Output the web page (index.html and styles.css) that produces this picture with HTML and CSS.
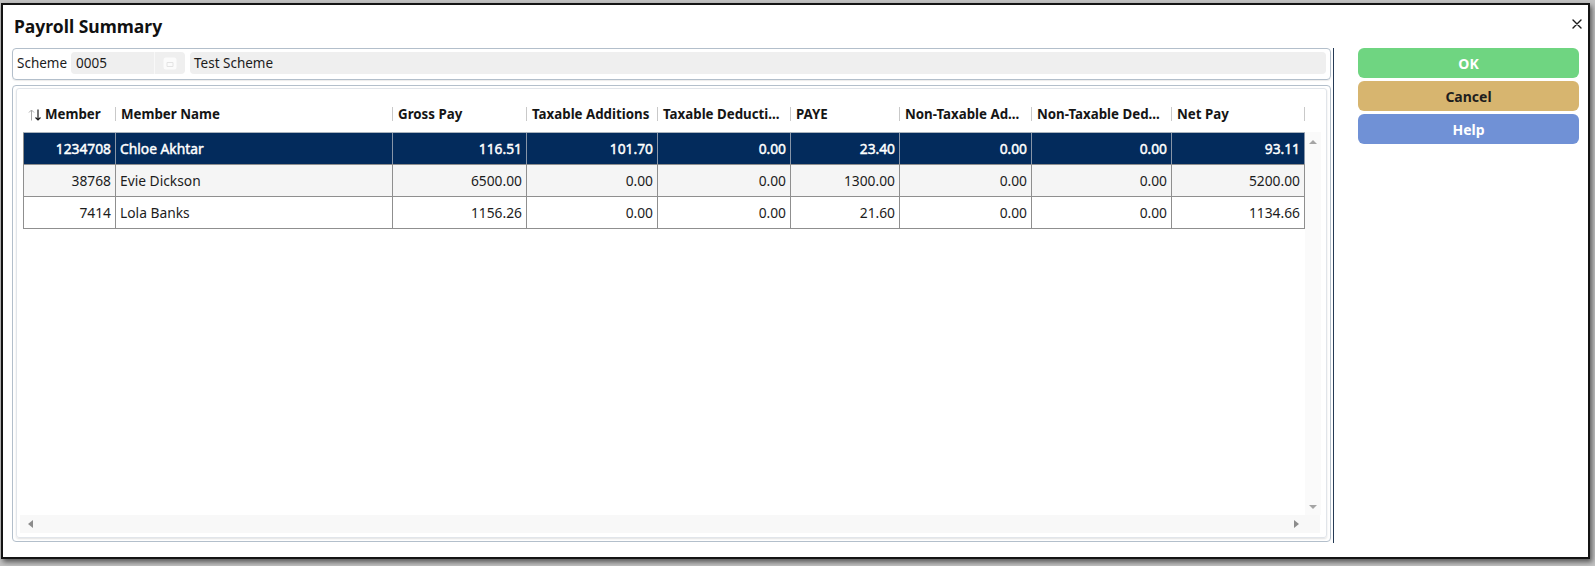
FILE: index.html
```html
<!DOCTYPE html>
<html lang="en">
<head>
<meta charset="utf-8">
<title>Payroll Summary</title>
<link rel="stylesheet" href="styles.css">
</head>
<body>
<div class="dialog">
  <div class="titlebar">
    <h1 class="title">Payroll Summary</h1>
    <button class="close" aria-label="Close">
      <svg width="10" height="10" viewBox="0 0 10 10"><path d="M1 1 L9 9 M9 1 L1 9" stroke="#1a1a1a" stroke-width="1.4" fill="none" stroke-linecap="round"/></svg>
    </button>
  </div>
  <div class="content">
    <div class="main">
      <div class="scheme-box">
        <span class="scheme-label">Scheme</span>
        <div class="code-field">
          <span class="code-value">0005</span>
          <span class="lookup">
            <svg width="14" height="13" viewBox="0 0 14 13"><rect x="0.5" y="0.5" width="13" height="12" rx="2.5" fill="#fbfbfb"/><path d="M4 5.5 H10 V9.5 H4 Z" fill="none" stroke="#e3e3e3" stroke-width="1"/></svg>
          </span>
        </div>
        <div class="name-field">Test Scheme</div>
      </div>
      <div class="grid-panel">
        <div class="grid-inner">
          <div class="grid-body">
            <div class="head-row">
              <div class="hcell"><svg class="sort" width="14" height="12" viewBox="0 0 14 12"><path d="M3.5 11.5 V1 M1 3.5 L3.5 1 L6 3.5" stroke="#a8a8a8" stroke-width="1" fill="none"/><path d="M10 0.5 V11 M7.5 8.5 L10 11 L12.5 8.5" stroke="#1a1a1a" stroke-width="1.2" fill="none"/></svg>Member</div>
              <div class="hcell">Member Name</div>
              <div class="hcell">Gross Pay</div>
              <div class="hcell">Taxable Additions</div>
              <div class="hcell">Taxable Deducti...</div>
              <div class="hcell">PAYE</div>
              <div class="hcell">Non-Taxable Ad...</div>
              <div class="hcell">Non-Taxable Ded...</div>
              <div class="hcell">Net Pay</div>
            </div>
            <div class="head-gap"></div>
            <div class="rows">
              <div class="row selected">
                <div class="cell num">1234708</div>
                <div class="cell">Chloe Akhtar</div>
                <div class="cell num">116.51</div>
                <div class="cell num">101.70</div>
                <div class="cell num">0.00</div>
                <div class="cell num">23.40</div>
                <div class="cell num">0.00</div>
                <div class="cell num">0.00</div>
                <div class="cell num">93.11</div>
              </div>
              <div class="row alt">
                <div class="cell num">38768</div>
                <div class="cell">Evie Dickson</div>
                <div class="cell num">6500.00</div>
                <div class="cell num">0.00</div>
                <div class="cell num">0.00</div>
                <div class="cell num">1300.00</div>
                <div class="cell num">0.00</div>
                <div class="cell num">0.00</div>
                <div class="cell num">5200.00</div>
              </div>
              <div class="row">
                <div class="cell num">7414</div>
                <div class="cell">Lola Banks</div>
                <div class="cell num">1156.26</div>
                <div class="cell num">0.00</div>
                <div class="cell num">0.00</div>
                <div class="cell num">21.60</div>
                <div class="cell num">0.00</div>
                <div class="cell num">0.00</div>
                <div class="cell num">1134.66</div>
              </div>
            </div>
            <div class="vscroll">
              <span class="arrow up"></span>
              <span class="arrow down"></span>
            </div>
          </div>
          <div class="hscroll">
            <span class="arrow left"></span>
            <span class="arrow right"></span>
          </div>
        </div>
      </div>
    </div>
    <div class="splitter"></div>
    <div class="actions">
      <button class="btn ok">OK</button>
      <button class="btn cancel">Cancel</button>
      <button class="btn help">Help</button>
    </div>
  </div>
</div>
</body>
</html>
```
FILE: styles.css
```css
* { box-sizing: border-box; }
html, body { margin: 0; padding: 0; }
body {
  width: 1595px;
  height: 566px;
  overflow: hidden;
  background: #c2c2c2;
  font-family: "Noto Sans", "Open Sans", sans-serif;
  font-size: 13.5px;
  color: #1c1c1c;
}
.dialog {
  margin: 3px 0 0 1px;
  width: 1589px;
  height: 556px;
  border: 2px solid #141414;
  background: #fff;
  box-shadow: 2px 3px 5px rgba(0, 0, 0, 0.55);
  display: flex;
  flex-direction: column;
}
.titlebar {
  height: 43px;
  display: flex;
  justify-content: space-between;
  align-items: flex-start;
  padding: 0 6px 0 11px;
}
.title {
  margin: 0;
  padding-top: 9px;
  font-size: 17.5px;
  line-height: 25px;
  font-weight: 700;
  color: #111;
}
.close {
  margin-top: 14px;
  width: 10px;
  height: 10px;
  padding: 0;
  border: 0;
  background: none;
  display: block;
}
.close svg { display: block; }
.content {
  display: flex;
  align-items: flex-start;
  padding-left: 9px;
}
.main {
  width: 1319px;
  display: flex;
  flex-direction: column;
  gap: 5px;
}
.scheme-box {
  height: 32px;
  border: 1px solid #b3bfcb;
  border-radius: 4px;
  display: flex;
  padding: 3px 4px 0 4px;
  box-shadow: 0 1px 1px rgba(0, 0, 0, 0.08);
}
.scheme-label { width: 54px; line-height: 22px; }
.code-field {
  width: 114px;
  height: 22px;
  display: flex;
  background: #efefef;
  border-radius: 4px;
}
.code-value {
  width: 84px;
  padding-left: 5px;
  line-height: 22px;
  border-right: 1px solid #f8f8f8;
}
.lookup {
  flex: 1;
  display: flex;
  align-items: center;
  justify-content: center;
}
.lookup svg { display: block; }
.name-field {
  flex: 1;
  margin-left: 5px;
  height: 22px;
  line-height: 22px;
  background: #efefef;
  border-radius: 4px;
  padding-left: 4px;
}
.grid-panel {
  height: 457px;
  border: 1px solid #b3bfcb;
  border-radius: 4px;
  padding: 2px 3px 3px 3px;
}
.grid-inner {
  height: 100%;
  border: 1px solid #e1e5ea;
  border-radius: 3px;
  box-shadow: 0 1px 2px rgba(0, 0, 0, 0.12);
  padding: 7px 5px 4px 6px;
  display: flex;
  flex-direction: column;
}
.grid-body {
  display: grid;
  grid-template-columns: 1282px 16px;
  grid-template-rows: 36px 383px;
}
.head-row, .row {
  display: grid;
  grid-template-columns: 92px 277px 134px 131px 133px 109px 132px 140px 133px;
}
.head-row { padding-left: 1px; }
.hcell {
  position: relative;
  padding: 9px 0 0 5px;
  font-size: 13.3px;
  line-height: 18px;
  font-weight: 700;
  white-space: nowrap;
  overflow: hidden;
  color: #151515;
}
.hcell:first-child { padding-left: 4px; }
.hcell::after {
  content: "";
  position: absolute;
  right: 0;
  top: 11px;
  width: 1px;
  height: 14px;
  background: #c9c9c9;
}
.sort { vertical-align: -2px; margin-right: 3px; }
.rows {
  border-top: 1px solid #a9b3bd;
}
.row {
  height: 32px;
  border-left: 1px solid #8f8f8f;
  border-bottom: 1px solid #8f8f8f;
  font-size: 13.8px;
}
.cell {
  border-right: 1px solid #8f8f8f;
  padding: 0 4px;
  line-height: 31px;
  white-space: nowrap;
  overflow: hidden;
}
.cell.num { text-align: right; }
.row.selected {
  background: #032b5c;
  color: #fff;
  -webkit-text-stroke: 0.45px #fff;
}
.row.selected .cell { border-right-color: #8795a8; }
.row.alt { background: #f5f5f5; }
.vscroll {
  background: #fafafa;
  display: flex;
  flex-direction: column;
  justify-content: space-between;
  align-items: center;
  padding: 8px 0 6px 0;
}
.hscroll {
  margin-left: -3px;
  width: 1300px;
  height: 18px;
  background: #f8f8f8;
  display: flex;
  justify-content: space-between;
  align-items: center;
  padding: 0 21px 0 8px;
}
.arrow { display: block; width: 0; height: 0; }
.arrow.up { border-left: 4px solid transparent; border-right: 4px solid transparent; border-bottom: 4px solid #a5a5a5; }
.arrow.down { border-left: 4px solid transparent; border-right: 4px solid transparent; border-top: 4px solid #a5a5a5; }
.arrow.left { border-top: 4px solid transparent; border-bottom: 4px solid transparent; border-right: 5px solid #8c8c8c; }
.arrow.right { border-top: 4px solid transparent; border-bottom: 4px solid transparent; border-left: 5px solid #8c8c8c; }
.splitter {
  width: 1px;
  height: 495px;
  margin-left: 2px;
  background: #253a55;
}
.actions {
  margin-left: 24px;
  width: 221px;
  display: flex;
  flex-direction: column;
  gap: 3px;
}
.btn {
  height: 30px;
  border: 0;
  border-radius: 6px;
  font-family: "Noto Sans", "Open Sans", sans-serif;
  font-size: 14px;
  font-weight: 700;
  padding: 0;
}
.btn.ok { background: #6fd581; color: #fff; }
.btn.cancel { background: #d7b56f; color: #1e1e1e; }
.btn.help { background: #7091d6; color: #fff; }
```
